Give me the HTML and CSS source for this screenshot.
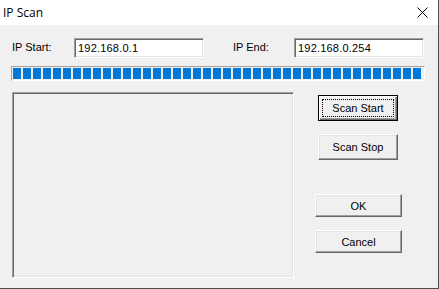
FILE: index.html
```html
<!DOCTYPE html>
<html lang="en">
<head>
  <meta charset="UTF-8">
  <title>IP Scan</title>
  <link rel="stylesheet" href="styles.css">
</head>
<body>

  <div class="window">
    <div class="titlebar">
      <span class="title">IP Scan</span>
      <svg class="close" width="11" height="11" viewBox="0 0 11 11">
        <path d="M0.5 0.5 L10.5 10.5 M10.5 0.5 L0.5 10.5" stroke="#000" stroke-width="1" fill="none"/>
      </svg>
    </div>

    <div class="content">
      <div class="range">
        <label>IP Start:</label>
        <input class="field" type="text" value="192.168.0.1">
        <span></span>
        <label>IP End:</label>
        <input class="field" type="text" value="192.168.0.254">
      </div>

      <div class="progress">
        <div class="progress-fill"></div>
      </div>

      <div class="main">
        <div class="list"></div>
        <div class="buttons">
          <button class="btn scan default"><span class="focus">Scan Start</span></button>
          <button class="btn scan stop">Scan Stop</button>
          <button class="btn wide ok">OK</button>
          <button class="btn wide cancel">Cancel</button>
        </div>
      </div>
    </div>
  </div>

</body>
</html>
```

FILE: styles.css
```css
body {
  margin: 0;
  font-family: "Liberation Sans", Arial, sans-serif;
  font-size: 11px;
  color: #000;
  background: #f0f0f0;
}

.window {
  width: 439px;
  height: 289px;
  box-sizing: border-box;
  border-right: 1px solid #4d4d4d;
  border-bottom: 1px solid #4d4d4d;
  background: #f0f0f0;
  display: flex;
  flex-direction: column;
}

.titlebar {
  height: 25px;
  flex: none;
  background: #fff;
  display: flex;
  align-items: center;
  justify-content: space-between;
  padding: 0 10px 0 3px;
}

.title {
  font-family: "Open Sans", sans-serif;
  font-size: 12px;
  margin-top: -1px;
}

.close {
  display: block;
}

.content {
  padding: 13px 0 0 12px;
}

.range {
  display: grid;
  grid-template-columns: 62px 130px 29px 61px 130px;
  height: 20px;
  align-items: center;
}

.range label {
  margin-top: -2px;
}

.field {
  height: 20px;
  box-sizing: border-box;
  margin: 0;
  padding: 0 0 0 3px;
  font: inherit;
  letter-spacing: 0.2px;
  background: #fff;
  border: 1px solid;
  border-color: #a0a0a0 #fff #fff #a0a0a0;
  box-shadow: inset 1px 1px #696969, inset -1px -1px #e3e3e3;
  outline: none;
}

.progress {
  width: 414px;
  height: 15px;
  box-sizing: border-box;
  margin: 8px 0 0 -1px;
  padding: 1px;
  border: 1px solid;
  border-color: #a0a0a0 #fff #fff #a0a0a0;
}

.progress-fill {
  width: 408px;
  height: 11px;
  background: repeating-linear-gradient(to right, #0078d7 0 8px, transparent 8px 10px);
}

.main {
  display: flex;
  margin-top: 11px;
}

.list {
  width: 282px;
  height: 186px;
  box-sizing: border-box;
  border: 1px solid;
  border-color: #a0a0a0 #fff #fff #a0a0a0;
  box-shadow: inset 1px 1px #696969, inset -1px -1px #e3e3e3;
}

.buttons {
  display: flex;
  flex-direction: column;
  align-items: flex-start;
  margin-left: 21px;
}

.btn {
  margin: 0;
  padding: 0;
  font: inherit;
  color: #000;
  background: #f0f0f0;
  box-sizing: border-box;
  border: 1px solid;
  border-color: #fff #696969 #696969 #fff;
  box-shadow: inset -1px -1px #a0a0a0, inset 1px 1px #e3e3e3;
  display: flex;
  align-items: center;
  justify-content: center;
}

.btn.scan {
  width: 80px;
  height: 26px;
  margin-left: 3px;
}

.btn.default {
  margin-top: 3px;
  border-color: #000;
  box-shadow: inset 1px 1px #fff, inset -1px -1px #696969, inset -2px -2px #a0a0a0;
  padding: 3px;
}

.focus {
  flex: 1;
  align-self: stretch;
  display: flex;
  align-items: center;
  justify-content: center;
  border: 1px dotted #000;
}

.btn.stop {
  margin-top: 13px;
}

.btn.wide {
  width: 87px;
  height: 23px;
}

.btn.ok {
  margin-top: 34px;
}

.btn.cancel {
  margin-top: 13px;
}
```
